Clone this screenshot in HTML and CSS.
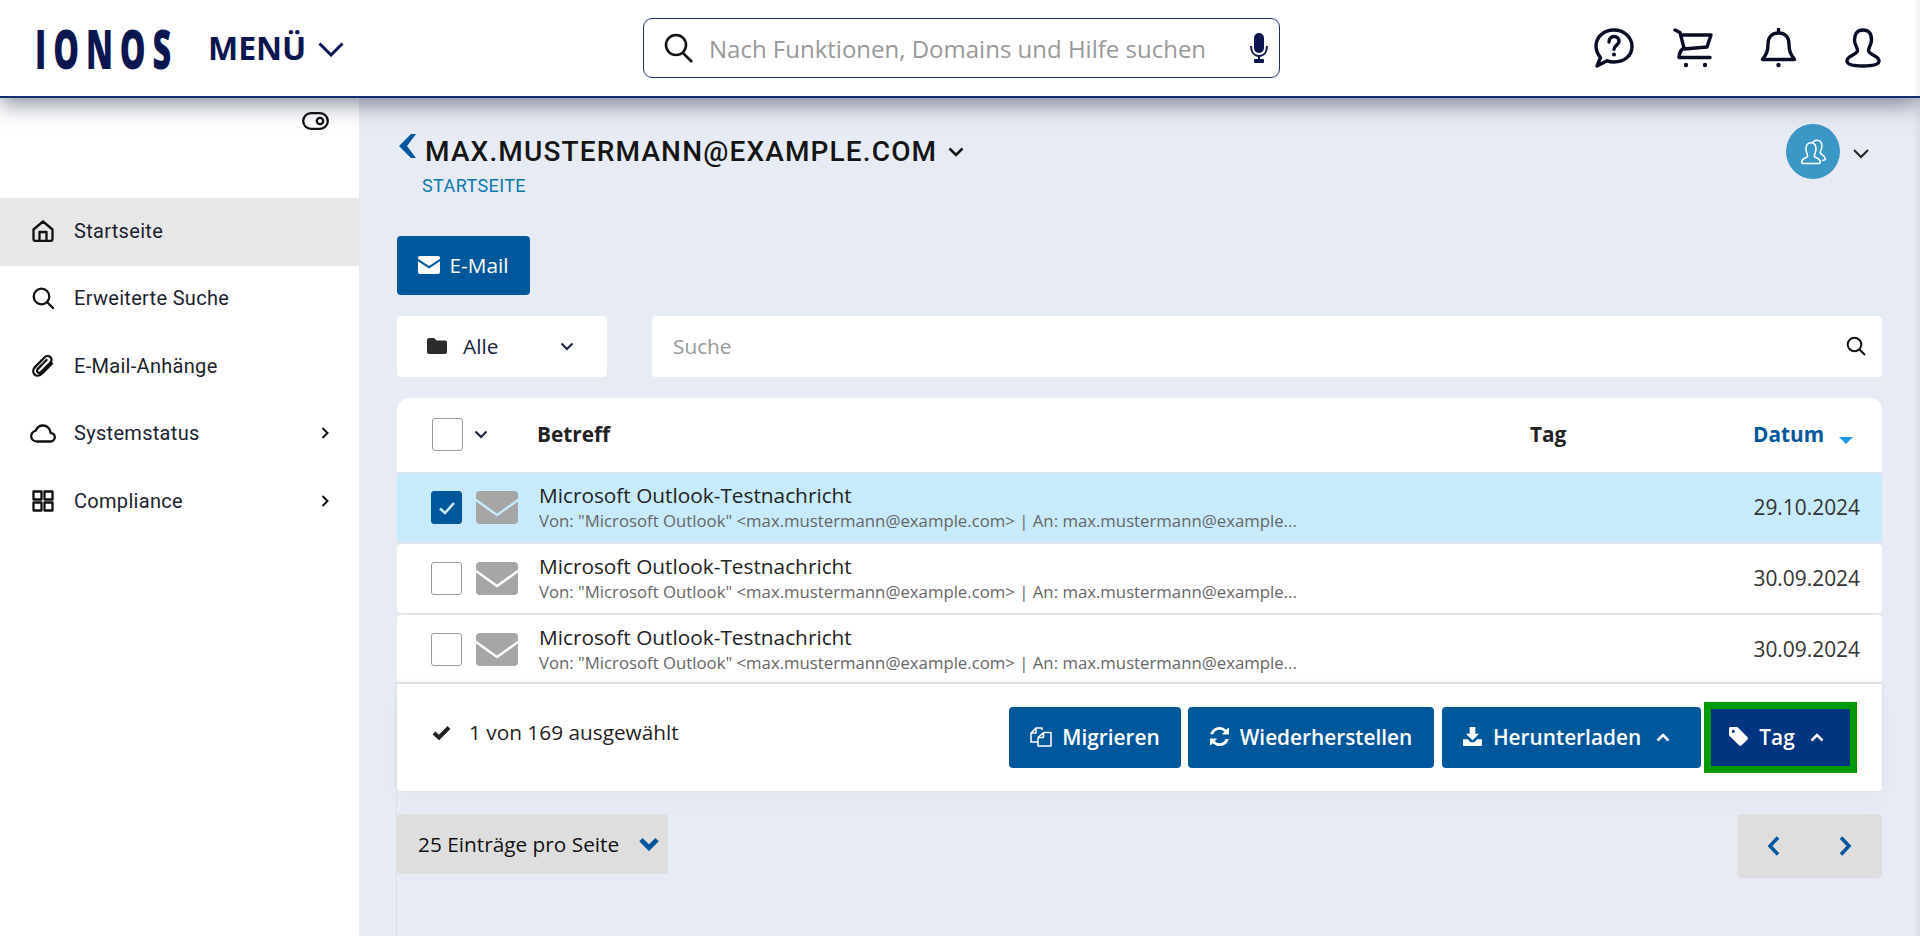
FILE: index.html
```html
<!DOCTYPE html>
<html lang="de">
<head>
    <meta charset="UTF-8">
    <title>IONOS Mailarchiv</title>
    <link rel="stylesheet" href="styles.css">
</head>
<body>
    <header class="top-bar">
        <div class="brand">
            <span class="logo"><span class="logo-text">IONOS</span></span>
            <span class="menu">MENÜ
                <svg class="menu-chevron" viewBox="0 0 26 15"><path d="M1.500 1.500 13 13 24.500 1.500"/></svg>
            </span>
        </div>
        <div class="top-search">
            <svg class="top-search-icon" viewBox="0 0 31 30"><circle cx="12" cy="12" r="10"/><path d="M19 20 28 29"/></svg>
            <span class="top-search-text">Nach Funktionen, Domains und Hilfe suchen</span>
            <svg class="mic" viewBox="0 0 20 30"><rect x="5" y="0" width="10" height="20" rx="5"/><path class="mic-arc" d="M2 13c0 6 3 10 8 10s8-4 8-10M10 23v4"/><rect x="5" y="26" width="10" height="4" rx="1"/></svg>
        </div>
        <div class="top-icons">
            <svg class="hicon hicon-help" viewBox="0 0 40 40"><path d="M3 38 6.500 29.500C3.500 26 2 22 2 18 2 9 10 2 20 2s18 7 18 16.500S30 34 20 34c-2.500 0-5-.5-7-1.200Z"/><path class="q" d="M15 14c0-3.500 2.200-5.500 5-5.500s5 2 5 4.800c0 3.700-5 4-5 8"/><circle class="dot" cx="20" cy="26.500" r="2"/></svg>
            <svg class="hicon hicon-cart" viewBox="0 0 40 40"><path d="M2 2 7 4.500 11 20C8 22 6 25 6 29.500H37M8 7H38L34 19 11 21"/><circle class="dot" cx="13" cy="37" r="2.200"/><circle class="dot" cx="32" cy="37" r="2.200"/></svg>
            <svg class="hicon hicon-bell" viewBox="0 0 37 40"><path d="M18.500 5C11 5 8 10 8 16 8 23 6.500 26 2.500 31.500H34.500C30.500 26 29 23 29 16 29 10 26 5 18.500 5ZM18.500 1V4"/><circle class="dot" cx="18.500" cy="37" r="2.200"/></svg>
            <svg class="hicon hicon-user" viewBox="0 0 36 40"><path d="M18 2C12 2 9.500 6 9.500 12c0 5 3 7 3 10.500C12.500 27 2 27 2 33c0 4 8 5 16 5s16-1 16-5c0-6-10.500-6-10.500-10.500C23.500 19 26.500 17 26.500 12 26.500 6 24 2 18 2Z"/></svg>
        </div>
    </header>

    <div class="page">
        <aside class="sidebar">
            <div class="toggle-row">
                <svg class="toggle" viewBox="0 0 27 18"><rect x="1.200" y="1.200" width="24.600" height="15.600" rx="7.800"/><circle cx="18" cy="9" r="3.200"/></svg>
            </div>
            <nav class="side-nav">
                <a class="side-item active">
                    <svg class="side-icon" viewBox="0 0 22 22"><path d="M1.500 9.500 11 1.500l9.500 8V19a1.800 1.800 0 0 1-1.800 1.800H3.300A1.800 1.800 0 0 1 1.500 19ZM7.500 20.500V12h7v8.500"/></svg>
                    Startseite
                </a>
                <a class="side-item">
                    <svg class="side-icon" viewBox="0 0 22 22"><circle cx="9.500" cy="9.500" r="7.800"/><path d="M15 15l6 6"/></svg>
                    Erweiterte Suche
                </a>
                <a class="side-item">
                    <svg class="side-icon" viewBox="0 0 22 22"><path d="M20 8.500 10 18.800c-2.400 2.400-5.600 2.500-7.500.6S.8 14.300 3.200 11.900L12.700 2.300c1.800-1.800 4.200-1.700 5.700-.2s1.600 3.900-.2 5.700L9 17.100c-1 1-2.400 1-3.300.1s-.9-2.300.1-3.300L14.500 5"/></svg>
                    E-Mail-Anhänge
                </a>
                <a class="side-item">
                    <svg class="side-icon side-icon-wide" viewBox="0 0 26 22"><path d="M7 19.500h13.500c2.500 0 4.300-1.800 4.300-4.200 0-2.300-1.700-4-4-4.200C20.200 6.500 17 3.500 13 3.500 9.500 3.500 7 5.500 5.800 8.500 3 9.500 1.200 11.500 1.200 14.200c0 3 2.500 5.300 5.800 5.300Z"/></svg>
                    Systemstatus
                    <svg class="side-chevron" viewBox="0 0 8 12"><path d="M1.500 1 6.500 6l-5 5"/></svg>
                </a>
                <a class="side-item">
                    <svg class="side-icon" viewBox="0 0 22 22"><rect x="1.500" y="1.500" width="8" height="8"/><rect x="12.500" y="1.500" width="8" height="8"/><rect x="1.500" y="12.500" width="8" height="8"/><rect x="12.500" y="12.500" width="8" height="8"/></svg>
                    Compliance
                    <svg class="side-chevron" viewBox="0 0 8 12"><path d="M1.500 1 6.500 6l-5 5"/></svg>
                </a>
            </nav>
        </aside>

        <main class="content">
            <div class="mail-head">
                <div>
                    <div class="mail-title">
                        <svg class="back" viewBox="0 0 17 24"><path d="M12 0h5L8 12l9 12h-5L0 12Z"/></svg>
                        <span>MAX.MUSTERMANN@EXAMPLE.COM</span>
                        <svg class="title-chevron" viewBox="0 0 16 10"><path d="M1.500 1.500 8 8l6.500-6.500"/></svg>
                    </div>
                    <div class="crumb">STARTSEITE</div>
                </div>
                <div class="account">
                    <span class="avatar">
                        <svg viewBox="0 0 32 30"><path class="back-user" d="M15 4c1-2 3-3 5-3 4 0 6 3 6 7 0 4-2 5-2 8 0 2 6 3 6 7 0 1-1 2-4 2"/><path d="M13 4c-4 0-6 3-6 7 0 4 2 6 2 9 0 2-7 2-7 7 0 1 1 1.500 3 1.500h16c2 0 3-.5 3-1.500 0-5-7-5-7-7 0-3 2-5 2-9 0-4-2-7-6-7Z"/></svg>
                    </span>
                    <svg class="account-chevron" viewBox="0 0 16 10"><path d="M1 1 8 8l7-7"/></svg>
                </div>
            </div>

            <button class="btn btn-mail">
                <svg class="btn-icon" viewBox="0 0 22 18"><path class="fill" d="M2 0h18a2 2 0 0 1 2 2v.800L11 10 0 2.800V2a2 2 0 0 1 2-2ZM0 5.200l11 7.300 11-7.300V16a2 2 0 0 1-2 2H2a2 2 0 0 1-2-2Z"/></svg>
                E-Mail
            </button>

            <div class="filter-row">
                <div class="folder-select">
                    <svg class="folder" viewBox="0 0 20 16"><path d="M2 0h5l2.500 2.500H18a2 2 0 0 1 2 2V14a2 2 0 0 1-2 2H2a2 2 0 0 1-2-2V2a2 2 0 0 1 2-2Z"/></svg>
                    <span>Alle</span>
                    <svg class="small-chevron" viewBox="0 0 14 9"><path d="M1.500 1.500 7 7l5.500-5.500"/></svg>
                </div>
                <div class="list-search">
                    <span>Suche</span>
                    <svg class="list-search-icon" viewBox="0 0 20 20"><circle cx="8.500" cy="8.500" r="6.800"/><path d="M13.500 13.500 19 19"/></svg>
                </div>
            </div>

            <section class="mail-table">
                <div class="table-head">
                    <span class="checkbox"></span>
                    <svg class="small-chevron head-chevron" viewBox="0 0 14 9"><path d="M1.500 1.500 7 7l5.500-5.500"/></svg>
                    <span class="col-subject">Betreff</span>
                    <span class="col-tag">Tag</span>
                    <span class="col-date">Datum<i class="sort-arrow"></i></span>
                </div>
                <div class="rows">
                    <div class="mail-row selected">
                        <span class="checkbox checked">
                            <svg viewBox="0 0 18 14"><path d="M2 7.500 7 12 16 2"/></svg>
                        </span>
                        <svg class="envelope" viewBox="0 0 42 33"><path d="M4 0h34a4 4 0 0 1 4 4v3.500L21 22.500 0 7.500V4a4 4 0 0 1 4-4ZM0 10.500l21 15 21-15V29a4 4 0 0 1-4 4H4a4 4 0 0 1-4-4Z"/></svg>
                        <div class="mail-text">
                            <div class="mail-subject">Microsoft Outlook-Testnachricht</div>
                            <div class="mail-from">Von: "Microsoft Outlook" &lt;max.mustermann@example.com&gt; | An: max.mustermann@example...</div>
                        </div>
                        <div class="mail-date">29.10.2024</div>
                    </div>
                    <div class="mail-row">
                        <span class="checkbox"></span>
                        <svg class="envelope" viewBox="0 0 42 33"><path d="M4 0h34a4 4 0 0 1 4 4v3.500L21 22.500 0 7.500V4a4 4 0 0 1 4-4ZM0 10.500l21 15 21-15V29a4 4 0 0 1-4 4H4a4 4 0 0 1-4-4Z"/></svg>
                        <div class="mail-text">
                            <div class="mail-subject">Microsoft Outlook-Testnachricht</div>
                            <div class="mail-from">Von: "Microsoft Outlook" &lt;max.mustermann@example.com&gt; | An: max.mustermann@example...</div>
                        </div>
                        <div class="mail-date">30.09.2024</div>
                    </div>
                    <div class="mail-row">
                        <span class="checkbox"></span>
                        <svg class="envelope" viewBox="0 0 42 33"><path d="M4 0h34a4 4 0 0 1 4 4v3.500L21 22.500 0 7.500V4a4 4 0 0 1 4-4ZM0 10.500l21 15 21-15V29a4 4 0 0 1-4 4H4a4 4 0 0 1-4-4Z"/></svg>
                        <div class="mail-text">
                            <div class="mail-subject">Microsoft Outlook-Testnachricht</div>
                            <div class="mail-from">Von: "Microsoft Outlook" &lt;max.mustermann@example.com&gt; | An: max.mustermann@example...</div>
                        </div>
                        <div class="mail-date">30.09.2024</div>
                    </div>
                </div>
            </section>

            <div class="action-bar">
                <div class="selected-count">
                    <svg viewBox="0 0 19 15"><path d="M2 8 7 12.500 17 2.500"/></svg>
                    1 von 169 ausgewählt
                </div>
                <div class="actions">
                    <button class="btn btn-migrate">
                        <svg class="btn-icon line" viewBox="0 0 22 20"><path d="M12 3V1H6L1 6V15H8M6 1V6H1M8 19V10.500L13.500 5.500H21V19ZM13.500 5.500V10.500H8"/></svg>
                        Migrieren
                    </button>
                    <button class="btn btn-restore">
                        <svg class="btn-icon" viewBox="0 0 20 20"><path class="fill" d="M10 0c2.800 0 5.200 1.100 7 3l2-2c.4-.4 1-.1 1 .4V8h-6.600c-.5 0-.8-.6-.4-1l2-2c-1.300-1.300-3-2-5-2-3 0-5.400 1.800-6.500 4.500H.3C1.500 3 5.300 0 10 0ZM0 12h6.600c.5 0 .8.6.4 1l-2 2c1.300 1.300 3 2 5 2 3 0 5.400-1.800 6.500-4.500h3.200C18.500 17 14.700 20 10 20c-2.800 0-5.200-1.100-7-3l-2 2c-.4.4-1 .1-1-.4Z"/></svg>
                        Wiederherstellen
                    </button>
                    <button class="btn btn-download">
                        <svg class="btn-icon" viewBox="0 0 20 20"><path class="fill" d="M7 0h6v7h4l-7 7-7-7h4ZM0 13h5l3 3h4l3-3h5v6a1 1 0 0 1-1 1H1a1 1 0 0 1-1-1Z"/></svg>
                        Herunterladen
                        <svg class="up-chevron" viewBox="0 0 14 9"><path d="M1.500 7.500 7 2l5.500 5.500"/></svg>
                    </button>
                    <button class="btn btn-tag">
                        <svg class="btn-icon" viewBox="0 0 20 20"><path class="fill" d="M1.500 0H8c.5 0 1 .2 1.400.6l9.900 9.900c.8.8.8 2 0 2.800l-6 6c-.8.800-2 .800-2.800 0L.6 9.400C.2 9 0 8.500 0 8V1.500C0 .7.700 0 1.500 0Zm3 3a1.600 1.600 0 1 0 0 3.200 1.600 1.600 0 0 0 0-3.200Z"/></svg>
                        Tag
                        <svg class="up-chevron" viewBox="0 0 14 9"><path d="M1.500 7.500 7 2l5.500 5.500"/></svg>
                    </button>
                </div>
            </div>

            <div class="pager-row">
                <div class="page-size">
                    25 Einträge pro Seite
                    <svg viewBox="0 0 20 13"><path d="M2.500 2.500 10 10l7.500-7.500"/></svg>
                </div>
                <div class="pager">
                    <svg viewBox="0 0 14 20"><path d="M11 1.500 3 10l8 8.500"/></svg>
                    <svg viewBox="0 0 14 20"><path d="M3 1.500 11 10l-8 8.500"/></svg>
                </div>
            </div>
        </main>
    </div>
</body>
</html>
```

FILE: styles.css
```css
/* Reset */
* {
    box-sizing: border-box;
}

html, body {
    margin: 0;
    height: 100%;
    overflow: hidden;
    font-family: "Open Sans", sans-serif;
    color: #222;
    background: #e7ebf3;
}

/* leichte Kante am rechten Fensterrand */
body::after {
    content: "";
    position: fixed;
    top: 0;
    right: 0;
    bottom: 0;
    width: 8px;
    background: linear-gradient(90deg, rgba(0, 0, 0, 0), rgba(0, 0, 0, 0.05));
    z-index: 20;
}

svg {
    display: block;
    flex: none;
}

/* Top Bar */
.top-bar {
    position: relative;
    z-index: 10;
    height: 98px;
    display: grid;
    grid-template-columns: 605px 637px 1fr;
    align-items: center;
    padding: 0 39px 0 38px;
    background: #fff;
    border-bottom: 2px solid #11306f;
    box-shadow: 0 5px 22px rgba(20, 30, 60, 0.55);
}

.brand {
    display: flex;
    align-items: center;
}

.logo {
    display: block;
    width: 132px;
    height: 50px;
    margin-left: -3px;
    color: #0b1650;
}

.logo-text {
    display: inline-block;
    font-size: 54px;
    font-weight: 800;
    line-height: 50px;
    letter-spacing: 11.500px;
    transform: scaleX(0.6);
    transform-origin: left center;
}

.menu {
    display: flex;
    align-items: center;
    margin-left: 41px;
    font-size: 32px;
    font-weight: 700;
    line-height: 40px;
    color: #0b1650;
}

.menu-chevron {
    width: 26px;
    height: 15px;
    margin: 2px 0 0 12px;
    fill: none;
    stroke: #0b1650;
    stroke-width: 3;
}

.top-search {
    display: flex;
    align-items: center;
    height: 60px;
    padding: 0 10px 0 20px;
    border: 1px solid #1d3568;
    border-radius: 9px;
}

.top-search-icon {
    width: 31px;
    height: 30px;
    fill: none;
    stroke: #111;
    stroke-width: 2.600;
}

.top-search-text {
    flex: 1;
    margin-left: 14px;
    font-size: 24px;
    color: #999;
}

.mic {
    width: 20px;
    height: 30px;
    fill: #0b1650;
}

.mic-arc {
    fill: none;
    stroke: #0b1650;
    stroke-width: 2;
}

.top-icons {
    display: flex;
    justify-content: flex-end;
    align-items: center;
}

.hicon {
    height: 40px;
    fill: none;
    stroke: #080c24;
    stroke-width: 3.400;
    stroke-linecap: round;
    stroke-linejoin: round;
}

.hicon .dot {
    fill: #080c24;
    stroke: none;
}

.hicon-help, .hicon-cart { width: 40px; }
.hicon-cart { margin-left: 39px; }
.hicon-bell { width: 37px; margin-left: 47px; }
.hicon-user { width: 36px; margin-left: 48px; }

/* Layout */
.page {
    display: flex;
    height: 838px;
}

/* Sidebar */
.sidebar {
    width: 359px;
    flex: none;
    background: #fff;
}

.toggle-row {
    display: flex;
    justify-content: flex-end;
    height: 100px;
    padding: 14px 30px 0 0;
}

.toggle {
    width: 27px;
    height: 18px;
    fill: none;
    stroke: #111;
    stroke-width: 2.300;
}

.side-item {
    display: flex;
    align-items: center;
    height: 67.500px;
    padding: 0 30px 2px 32px;
    font-family: Roboto, sans-serif;
    font-size: 20px;
    letter-spacing: 0.3px;
    color: #1b2230;
}

.side-item.active {
    background: #e7e7e7;
}

.side-icon {
    width: 22px;
    height: 22px;
    margin-right: 20px;
    fill: none;
    stroke: #111;
    stroke-width: 2.300;
    stroke-linejoin: round;
    stroke-linecap: round;
}

.side-icon-wide {
    width: 26px;
    margin: 0 18px 0 -2px;
}

.side-chevron {
    width: 8px;
    height: 12px;
    margin-left: auto;
    fill: none;
    stroke: #111;
    stroke-width: 2;
}

/* Inhalt */
.content {
    flex: 1;
    display: flex;
    flex-direction: column;
    padding: 0 38px;
    min-width: 0;
}

.mail-head {
    display: flex;
    justify-content: space-between;
    height: 138px;
    flex: none;
}

.mail-title {
    display: flex;
    align-items: center;
    height: 32px;
    margin: 37px 0 0 2px;
    font-family: Roboto, sans-serif;
    font-size: 28px;
    font-weight: 500;
    letter-spacing: 1.150px;
    color: #151515;
}

.back {
    width: 17px;
    height: 24px;
    margin: -10px 9px 0 0;
    fill: #00589c;
}

.title-chevron {
    width: 16px;
    height: 10px;
    margin: 2px 0 0 11px;
    fill: none;
    stroke: #151515;
    stroke-width: 2.500;
}

.crumb {
    margin: 9px 0 0 25px;
    font-family: Roboto, sans-serif;
    font-size: 18px;
    line-height: 20px;
    letter-spacing: 0.4px;
    color: #0b78b0;
}

.account {
    display: flex;
    align-items: center;
    height: 55px;
    margin-top: 26px;
    padding-right: 13px;
}

.avatar {
    display: flex;
    align-items: center;
    justify-content: center;
    width: 54px;
    height: 55px;
    border-radius: 50%;
    background: #3a97c6;
}

.avatar svg {
    width: 27px;
    height: 26px;
    fill: none;
    stroke: #fff;
    stroke-width: 1.800;
    stroke-linejoin: round;
}

.account-chevron {
    width: 16px;
    height: 10px;
    margin: 4px 0 0 13px;
    fill: none;
    stroke: #222;
    stroke-width: 2;
}

/* Buttons */
.btn {
    display: flex;
    align-items: center;
    justify-content: center;
    height: 61px;
    padding: 0 0 2px;
    border: none;
    border-radius: 4px;
    background: #00589c;
    color: #fff;
    font-family: "Open Sans", sans-serif;
    font-size: 20.800px;
    font-weight: 600;
}

.btn-icon {
    width: 19px;
    height: 19px;
    margin-right: 11px;
}

.btn-icon .fill {
    fill: #fff;
}

.btn-icon.line {
    width: 22px;
    height: 20px;
    margin-right: 10px;
    fill: none;
    stroke: #fff;
    stroke-width: 1.500;
    stroke-linejoin: round;
}

.up-chevron {
    width: 14px;
    height: 9px;
    margin: 2px 0 0 15px;
    fill: none;
    stroke: #fff;
    stroke-width: 2.600;
}

.btn-mail {
    width: 133px;
    height: 59px;
    flex: none;
    font-weight: 400;
}

.btn-mail .btn-icon {
    width: 22px;
    height: 18px;
    margin-right: 9px;
}

/* Filter */
.filter-row {
    display: flex;
    flex: none;
    gap: 45px;
    height: 61px;
    margin-top: 21px;
}

.folder-select {
    display: flex;
    align-items: center;
    width: 210px;
    padding: 0 33px 1px 30px;
    background: #fff;
    border-radius: 4px;
    font-size: 20.800px;
    color: #16213a;
}

.folder {
    width: 20px;
    height: 16px;
    margin-right: 16px;
    fill: #2b2b2b;
}

.small-chevron {
    width: 14px;
    height: 9px;
    margin-left: auto;
    fill: none;
    stroke: #16213a;
    stroke-width: 2;
}

.list-search {
    flex: 1;
    display: flex;
    align-items: center;
    justify-content: space-between;
    padding: 0 16px 1px 21px;
    background: #fff;
    border-radius: 4px;
    font-size: 20.800px;
    color: #999;
}

.list-search-icon {
    width: 20px;
    height: 20px;
    fill: none;
    stroke: #111;
    stroke-width: 2;
}

/* Tabelle */
.mail-table {
    flex: none;
    margin-top: 21px;
    background: #e3e6ec;
    border-radius: 12px 12px 0 0;
    overflow: hidden;
}

.table-head {
    display: flex;
    align-items: center;
    height: 74px;
    padding: 0 0 2px 35px;
    background: #fff;
    font-size: 20.800px;
    font-weight: 700;
}

.head-chevron {
    margin: 0 0 0 11px;
}

.col-subject {
    margin-left: 49px;
}

.col-tag {
    margin-left: auto;
    width: 223px;
}

.col-date {
    display: flex;
    width: 129px;
    color: #00589c;
}

.sort-arrow {
    width: 0;
    height: 0;
    margin: 17px 0 0 15px;
    border-left: 7px solid transparent;
    border-right: 7px solid transparent;
    border-top: 7px solid #1e9bef;
}

.rows {
    height: 210px;
    padding-top: 1px;
    overflow: hidden;
}

.mail-row {
    display: flex;
    align-items: center;
    height: 69px;
    margin-bottom: 2px;
    padding: 0 22px 0 34px;
    background: #fff;
    border-radius: 4px;
}

.mail-row.selected {
    background: #c7eafd;
}

.checkbox {
    display: flex;
    align-items: center;
    justify-content: center;
    flex: none;
    width: 31px;
    height: 33px;
    background: #fff;
    border: 1px solid #9a9a9a;
    border-radius: 3px;
}

.checkbox.checked {
    background: #00589c;
    border-color: #00589c;
}

.checkbox svg {
    width: 18px;
    height: 14px;
    fill: none;
    stroke: #c7eafd;
    stroke-width: 2.600;
}

.envelope {
    width: 42px;
    height: 33px;
    margin-left: 14px;
    fill: #a6a6a6;
}

.mail-text {
    flex: 1;
    margin: -2px 0 0 21px;
    min-width: 0;
}

.mail-subject {
    margin-bottom: 1px;
    font-size: 20.800px;
    line-height: 28px;
    color: #222;
}

.mail-from {
    font-size: 16.760px;
    line-height: 22px;
    color: #666;
}

.mail-date {
    margin-top: -2px;
    font-size: 20.900px;
    color: #333;
}

/* Aktionen */
.action-bar {
    display: flex;
    flex: none;
    align-items: center;
    justify-content: space-between;
    height: 107px;
    margin-top: 2px;
    padding: 0 25px 0 35px;
    background: #fff;
    border-radius: 0 0 4px 4px;
    box-shadow: 0 -2px 4px rgba(0, 0, 0, 0.1), 0 12px 24px rgba(0, 0, 0, 0.02);
}

.selected-count {
    display: flex;
    align-items: center;
    margin-top: -11px;
    font-size: 20.800px;
    color: #222;
}

.selected-count svg {
    width: 19px;
    height: 15px;
    margin-right: 18px;
    fill: none;
    stroke: #222;
    stroke-width: 4;
}

.actions {
    display: flex;
    align-items: center;
}

.btn-migrate { width: 172px; }
.btn-restore { width: 246px; margin-left: 7px; }
.btn-download { width: 259px; margin-left: 8px; padding-right: 10px; }

.btn-tag {
    width: 153px;
    height: 71px;
    margin-left: 3px;
    padding-right: 8px;
    background: #00357f;
    border: 7px solid #009900;
    border-radius: 0;
}

/* Seiten */
.pager-row {
    flex: 1;
    display: flex;
    align-items: flex-start;
    justify-content: space-between;
    padding-top: 23px;
    box-shadow: -1px 0 0 #dadde6;
}

.page-size {
    display: flex;
    align-items: center;
    justify-content: space-between;
    width: 271px;
    height: 60px;
    padding: 0 8px 0 21px;
    background: #dedede;
    border-radius: 4px;
    font-size: 20.800px;
    color: #111;
}

.page-size svg {
    width: 22px;
    height: 14px;
    fill: none;
    stroke: #00589c;
    stroke-width: 4.400;
}

.pager {
    display: flex;
    align-items: center;
    justify-content: space-between;
    width: 145px;
    height: 64px;
    padding: 0 30px;
    background: #dedede;
    border-radius: 4px;
}

.pager svg {
    width: 14px;
    height: 20px;
    fill: none;
    stroke: #00589c;
    stroke-width: 3.500;
}
```
